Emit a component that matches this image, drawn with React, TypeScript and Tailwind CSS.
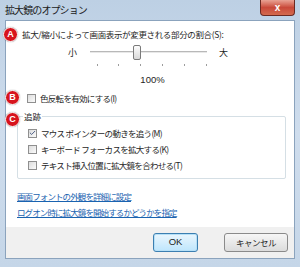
import { Check } from 'lucide-react';

const font = "font-['Noto_Sans_CJK_JP','Noto_Sans_CJK_SC',sans-serif]";

function Badge({ letter, className }: { letter: string; className: string }) {
  return (
    <div className={`absolute flex h-[15px] w-[15px] items-center justify-center rounded-full border border-white bg-[#d7141d] text-[9px] font-bold text-white shadow-[0_0_1px_rgba(0,0,0,0.5)] font-['Liberation_Sans',sans-serif] ${className}`}>
      {letter}
    </div>
  );
}

function Box({ checked }: { checked?: boolean }) {
  return (
    <div className="flex h-[9px] w-[9px] shrink-0 items-center justify-center border border-[#8f8f8f] bg-gradient-to-br from-[#dcdcdc] to-[#fbfbfb]">
      {checked && <Check className="h-[8px] w-[8px] text-[#3a4e7a]" strokeWidth={3} />}
    </div>
  );
}

function CheckRow({ label, checked }: { label: string; checked?: boolean }) {
  return (
    <div className="flex h-[16px] items-center gap-[4px]">
      <Box checked={checked} />
      <span className="text-[8.5px] leading-[12px] tracking-[-0.7px] text-[#1e1e1e]">{label}</span>
    </div>
  );
}

export default function App() {
  const ticks = [97, 118, 140, 162, 184, 206];
  return (
    <div className={`relative flex h-[267px] w-[300px] flex-col overflow-hidden bg-gradient-to-b from-[#bdd0e4] via-[#cfdded] to-[#c5d6e8] ${font}`}>
      <div className="flex h-[20px] shrink-0 items-start justify-between">
        <span className="pl-[5px] pt-[3px] text-[10px] leading-[14px] tracking-[-0.9px] text-[#1b1b1b]">拡大鏡のオプション</span>
        <div className="mr-[5px] flex h-[16px] w-[35px] items-center justify-center rounded-b-[4px] border border-t-0 border-[#6b2a22] bg-gradient-to-b from-[#e8a294] via-[#c9493a] to-[#d36a4e] text-[10px] font-bold text-white font-['Liberation_Sans',sans-serif]">
          x
        </div>
      </div>

      <div className="mx-[5px] flex flex-1 flex-col border border-[#8ba3bd] bg-white">
        <div className="flex flex-1 flex-col pl-[16px] pr-[7px]">
          <div className="mt-[6px] text-[8.5px] leading-[14px] tracking-[-0.35px] text-[#1e1e1e]">
            拡大/縮小によって画面表示が変更される部分の割合(S):
          </div>

          <div className="mt-[3px] flex h-[18px] items-center">
            <span className="ml-[46px] text-[9px] text-[#1e1e1e]">小</span>
            <div className="relative ml-[13px] h-[18px] w-[117px]">
              <div className="absolute left-0 right-0 top-[7px] h-[2px] border-t border-[#b8b8b8] bg-[#e8e8e8]" />
              <div className="absolute left-[43px] top-[1px] h-[15px] w-[8px] rounded-[2px] border border-[#7a7a7a] bg-gradient-to-b from-[#fdfdfd] to-[#d8d8d8]" />
            </div>
            <span className="ml-[12px] text-[9px] text-[#1e1e1e]">大</span>
          </div>

          <div className="relative h-[6px]">
            {ticks.map((x) => (
              <div key={x} className="absolute top-[2px] h-[2px] w-px bg-[#9c9c9c]" style={{ left: x - 22 }} />
            ))}
          </div>

          <div className="mt-[6px] flex justify-center pr-[4px] text-[9.5px] leading-[12px] text-[#1e1e1e] font-['Liberation_Sans',sans-serif]">
            100%
          </div>

          <div className="mt-[4px] pl-[5px]">
            <CheckRow label="色反転を有効にする(I)" />
          </div>

          <div className="relative -ml-[5px] mr-[1px] mt-[10px] h-[63px] rounded-[2px] border border-[#d5dfe5]">
            <span className="absolute -top-[8px] left-[5px] bg-white px-[1px] text-[8.5px] leading-[14px] text-[#1e1e1e]">追跡</span>
            <div className="flex flex-col pl-[10px] pt-[8px]">
              <CheckRow label="マウス ポインターの動きを追う(M)" checked />
              <CheckRow label="キーボード フォーカスを拡大する(K)" />
              <CheckRow label="テキスト挿入位置に拡大鏡を合わせる(T)" />
            </div>
          </div>

          <div className="mt-[11px] -ml-[5px] flex flex-col gap-[4px] text-[8.5px] leading-[12px] tracking-[-0.9px] text-[#1a63b0]">
            <span className="underline">画面フォントの外観を詳細に設定</span>
            <span className="underline">ログオン時に拡大鏡を開始するかどうかを指定</span>
          </div>
        </div>

        <div className="flex h-[31px] shrink-0 items-start justify-end gap-[26px] bg-[#f0f0f0] pr-[6px] pt-[6px]">
          <button className="flex h-[19px] w-[45px] items-center justify-center rounded-[3px] border border-[#3c7fb1] bg-gradient-to-b from-[#eaf6fd] to-[#bee6fd] text-[9.5px] text-[#1e1e1e] shadow-[inset_0_0_0_1px_#b6e0f7] font-['Liberation_Sans',sans-serif]">
            OK
          </button>
          <button className="flex h-[19px] w-[64px] items-center justify-center rounded-[3px] border border-[#8a8a8a] bg-gradient-to-b from-[#f6f6f6] to-[#dcdcdc] text-[8.5px] tracking-[-0.5px] text-[#1e1e1e]">
            キャンセル
          </button>
        </div>
      </div>
      <div className="h-[8px] shrink-0" />

      <Badge letter="A" className="left-[3px] top-[27px]" />
      <Badge letter="B" className="left-[5px] top-[90px]" />
      <Badge letter="C" className="left-[5px] top-[112px]" />
    </div>
  );
}
